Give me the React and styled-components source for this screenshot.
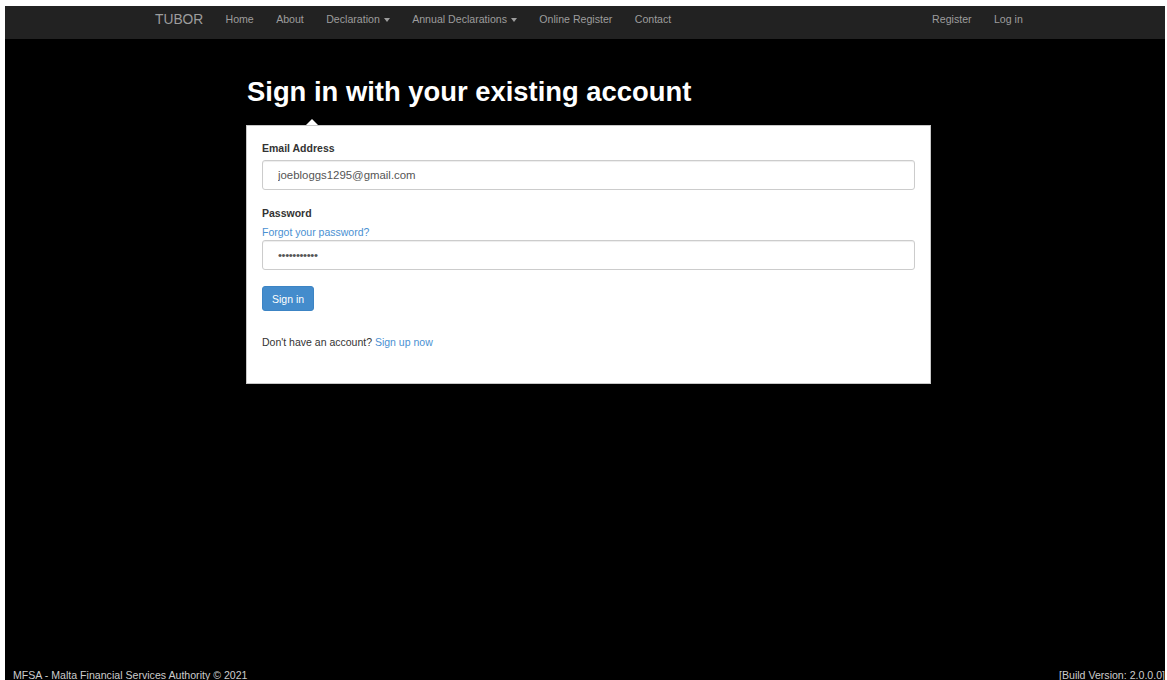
import React from "react";
import styled, { createGlobalStyle } from "styled-components";

const GlobalStyle = createGlobalStyle`
  html, body {
    margin: 0;
    padding: 0;
    background: #fff;
    overflow: hidden;
  }

  body {
    font-family: "Liberation Sans", Arial, sans-serif;
  }
`;

const Frame = styled.div`
  box-sizing: border-box;
  height: 680px;
  padding: 6px 2px 0 5px;
  display: flex;
  flex-direction: column;
`;

const Navbar = styled.nav`
  height: 33px;
  flex-shrink: 0;
  background-color: #222;
  display: flex;
  align-items: flex-start;
  padding: 0 131px 0 140px;
`;

const Brand = styled.a`
  color: #9d9d9d;
  font-size: 13.8px;
  line-height: 18px;
  padding: 5px 11px 0 10px;
  text-decoration: none;
`;

const NavList = styled.ul`
  display: flex;
  list-style: none;
  margin: 0;
  padding: 0;
  margin-left: ${(props) => (props.right ? "auto" : "0")};
`;

const NavLink = styled.a`
  display: flex;
  align-items: center;
  color: #9d9d9d;
  font-size: 10.6px;
  line-height: 15px;
  padding: 6px 11.2px 0;
  text-decoration: none;
`;

const Caret = styled.span`
  display: inline-block;
  width: 0;
  height: 0;
  margin-left: 4px;
  border-top: 4px solid #9d9d9d;
  border-left: 3.5px solid transparent;
  border-right: 3.5px solid transparent;
`;

const Page = styled.div`
  flex: 1;
  background: #000;
  display: flex;
  flex-direction: column;
`;

const Main = styled.main`
  flex: 1;
`;

const Content = styled.div`
  width: 685px;
  margin-left: 241px;
`;

const Heading = styled.h1`
  margin: 38px 0 18px 1px;
  color: #fff;
  font-size: 27.4px;
  line-height: 30px;
  font-weight: 700;
`;

const Card = styled.div`
  position: relative;
  background: #fff;
  border: 1px solid #c8c8c8;
  padding: 15px 15px 33px;

  &::before {
    content: "";
    position: absolute;
    top: -7px;
    left: 59px;
    border-bottom: 6px solid #fff;
    border-left: 6px solid transparent;
    border-right: 6px solid transparent;
  }
`;

const FormGroup = styled.div`
  margin-bottom: 16px;
`;

const Label = styled.label`
  display: block;
  color: #333;
  font-size: 10.5px;
  font-weight: 700;
  line-height: 15px;
  margin-bottom: 4px;
`;

const Link = styled.a`
  color: #4a90d2;
  font-size: 10.5px;
  line-height: 15px;
  text-decoration: none;
`;

const ForgotLink = styled(Link)`
  display: block;
`;

const Input = styled.input`
  display: block;
  box-sizing: border-box;
  width: 100%;
  height: 30px;
  padding: 0 15px;
  border: 1px solid #ccc;
  border-radius: 3px;
  box-shadow: inset 0 1px 1px rgba(0, 0, 0, 0.075);
  color: #555;
  font-family: inherit;
  font-size: 11.4px;
  letter-spacing: ${(props) => (props.type === "password" ? "-0.4px" : "0")};
  outline: none;
`;

const Button = styled.button`
  display: block;
  height: 25px;
  padding: 0 9px;
  border: 1px solid #3c84c4;
  border-radius: 3px;
  background-color: #448ccc;
  color: #fff;
  font-family: inherit;
  font-size: 10.5px;
  cursor: pointer;
`;

const Prompt = styled.p`
  margin: 24px 0 0;
  color: #333;
  font-size: 10.5px;
  line-height: 15px;
`;

const Footer = styled.footer`
  height: 12px;
  display: flex;
  justify-content: space-between;
  padding-left: 8px;
  color: #ccc;
  font-size: 10.6px;
  line-height: 15px;
`;

const leftLinks = [
  { label: "Home" },
  { label: "About" },
  { label: "Declaration", dropdown: true },
  { label: "Annual Declarations", dropdown: true },
  { label: "Online Register" },
  { label: "Contact" },
];

const rightLinks = [{ label: "Register" }, { label: "Log in" }];

const NavItems = ({ items, right }) => (
  <NavList right={right}>
    {items.map((item) => (
      <li key={item.label}>
        <NavLink href="#">
          {item.label}
          {item.dropdown && <Caret />}
        </NavLink>
      </li>
    ))}
  </NavList>
);

export default function App() {
  return (
    <>
      <GlobalStyle />
      <Frame>
        <Navbar>
          <Brand href="#">TUBOR</Brand>
          <NavItems items={leftLinks} />
          <NavItems items={rightLinks} right />
        </Navbar>
        <Page>
          <Main>
            <Content>
              <Heading>Sign in with your existing account</Heading>
              <Card>
                <FormGroup>
                  <Label htmlFor="email">Email Address</Label>
                  <Input
                    id="email"
                    type="email"
                    defaultValue="joebloggs1295@gmail.com"
                    readOnly
                  />
                </FormGroup>
                <FormGroup>
                  <Label htmlFor="password">Password</Label>
                  <ForgotLink href="#">Forgot your password?</ForgotLink>
                  <Input
                    id="password"
                    type="password"
                    defaultValue="Password123"
                    readOnly
                  />
                </FormGroup>
                <Button type="button">Sign in</Button>
                <Prompt>
                  Don't have an account? <Link href="#">Sign up now</Link>
                </Prompt>
              </Card>
            </Content>
          </Main>
          <Footer>
            <span>MFSA - Malta Financial Services Authority © 2021</span>
            <span>[Build Version: 2.0.0.0]</span>
          </Footer>
        </Page>
      </Frame>
    </>
  );
}
